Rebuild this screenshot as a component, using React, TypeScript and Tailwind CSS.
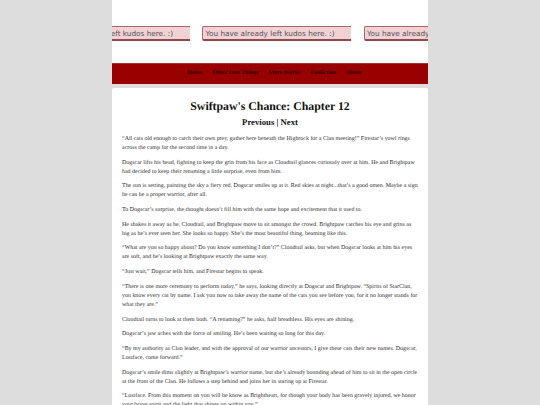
const paragraphs = [
  "“All cats old enough to catch their own prey, gather here beneath the Highrock for a Clan meeting!” Firestar’s yowl rings across the camp for the second time in a day.",
  "Dogscar lifts his head, fighting to keep the grin from his face as Cloudtail glances curiously over at him. He and Brightpaw had decided to keep their renaming a little surprise, even from him.",
  "The sun is setting, painting the sky a fiery red. Dogscar smiles up at it. Red skies at night...that’s a good omen. Maybe a sign he can be a proper warrior, after all.",
  "To Dogscar’s surprise, the thought doesn’t fill him with the same hope and excitement that it used to.",
  "He shakes it away as he, Cloudtail, and Brightpaw move to sit amongst the crowd. Brightpaw catches his eye and grins as big as he’s ever seen her. She looks so happy. She’s the most beautiful thing, beaming like this.",
  "“What are you so happy about? Do you know something I don’t?” Cloudtail asks, but when Dogscar looks at him his eyes are soft, and he’s looking at Brightpaw exactly the same way.",
  "“Just wait,” Dogscar tells him, and Firestar begins to speak.",
  "“There is one more ceremony to perform today,” he says, looking directly at Dogscar and Brightpaw. “Spirits of StarClan, you know every cat by name. I ask you now to take away the name of the cats you see before you, for it no longer stands for what they are.”",
  "Cloudtail turns to look at them both. “A renaming?” he asks, half breathless. His eyes are shining.",
  "Dogscar’s jaw aches with the force of smiling. He’s been waiting so long for this day.",
  "“By my authority as Clan leader, and with the approval of our warrior ancestors, I give these cats their new names. Dogscar, Lostface, come forward.”",
  "Dogscar’s smile dims slightly at Brightpaw’s warrior name, but she’s already bounding ahead of him to sit in the open circle at the front of the Clan. He follows a step behind and joins her in staring up at Firestar.",
  "“Lostface. From this moment on you will be know as Brightheart, for though your body has been gravely injured, we honor your brave spirit and the light that shines on within you.”",
];

const navLinks = ["Home", "Other Lost Things", "More Works", "Fanfiction", "About"];

function KudosNote() {
  return (
    <div className="h-[15px] w-[149px] shrink-0 rounded-l-[2px] border border-r-0 border-b-2 border-[#a8666a] border-b-[#8f4a4e] bg-[#f0d2d4] pl-[2.5px] font-['DejaVu_Sans',sans-serif] text-[7.3px] leading-[13px] whitespace-nowrap text-[#555055]">
      You have already left kudos here. :)
    </div>
  );
}

export default function App() {
  return (
    <div className="h-[405px] overflow-hidden bg-[#dddddd] font-['Liberation_Serif',serif] [text-rendering:geometricPrecision]">
      <div className="mx-auto w-[316px]">
        <div className="h-[63px] overflow-hidden bg-white pt-[26px]">
          <div className="-ml-[71.5px] flex gap-[12.5px]">
            <KudosNote />
            <KudosNote />
            <KudosNote />
          </div>
        </div>

        <nav className="flex h-[21px] items-center justify-center gap-[10px] border-t border-[#a83333] bg-[#990000] pb-[1px] pl-[9px] text-[5.9px] font-bold text-[#300000]">
          {navLinks.map((link) => (
            <a key={link}>{link}</a>
          ))}
        </nav>

        <main className="mt-1 rounded-t-[2px] bg-white px-[10px] pt-[8px]">
          <h1 className="text-center text-[11.8px] leading-[20px] font-bold text-[#111]">
            Swiftpaw's Chance: Chapter 12
          </h1>
          <h2 className="text-center text-[8.7px] leading-[13px] font-bold text-[#111]">
            Previous | Next
          </h2>
          <div className="mt-[6px] flex flex-col gap-[5.7px]">
            {paragraphs.map((text) => (
              <p key={text} className="text-[5.94px] leading-[9px] text-[#2e2e2e]">
                {text}
              </p>
            ))}
          </div>
        </main>
      </div>
    </div>
  );
}
